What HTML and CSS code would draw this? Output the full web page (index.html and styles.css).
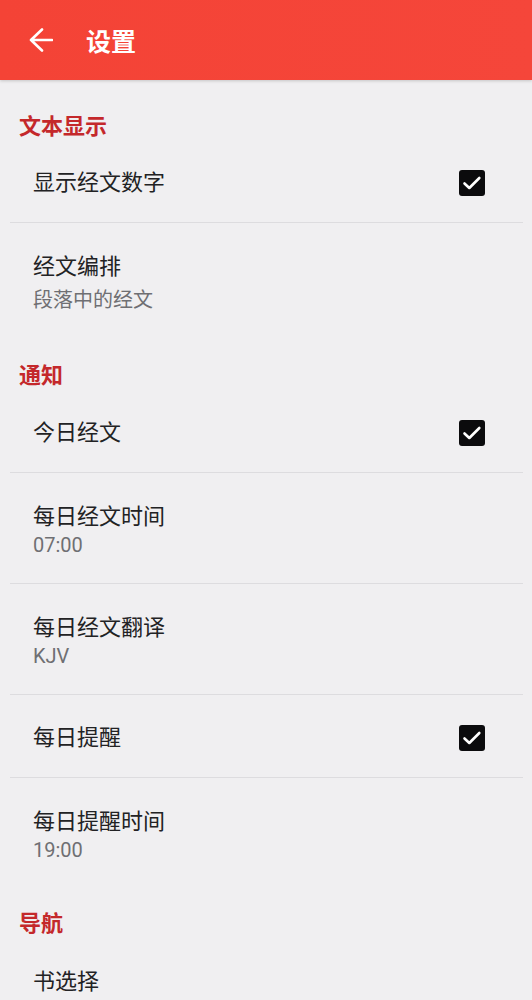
FILE: index.html
```html
<!DOCTYPE html>
<html lang="zh-CN">
<head>
<meta charset="utf-8">
<title>设置</title>
<link rel="stylesheet" href="styles.css">
</head>
<body>
<header class="toolbar">
  <svg class="back" width="24" height="24" viewBox="0 0 24 24" aria-hidden="true">
    <path d="M23 12H2M13 1.5L2 12l11 10.5" fill="none" stroke="#fff" stroke-width="2.6" stroke-linecap="round" stroke-linejoin="round"/>
  </svg>
  <h1 class="title">设置</h1>
</header>
<main class="prefs">
  <div class="category first">文本显示</div>
  <div class="pref single">
    <span class="pref-title">显示经文数字</span>
    <span class="check"><svg width="26" height="26" viewBox="0 0 26 26"><path d="M5.5 13.5l4.8 4.5 10-10" fill="none" stroke="#fff" stroke-width="2.6" stroke-linecap="round" stroke-linejoin="round"/></svg></span>
  </div>
  <div class="pref double last spaced">
    <span class="pref-title">经文编排</span>
    <span class="pref-sub">段落中的经文</span>
  </div>

  <div class="category">通知</div>
  <div class="pref single">
    <span class="pref-title">今日经文</span>
    <span class="check"><svg width="26" height="26" viewBox="0 0 26 26"><path d="M5.5 13.5l4.8 4.5 10-10" fill="none" stroke="#fff" stroke-width="2.6" stroke-linecap="round" stroke-linejoin="round"/></svg></span>
  </div>
  <div class="pref double">
    <span class="pref-title">每日经文时间</span>
    <span class="pref-sub">07:00</span>
  </div>
  <div class="pref double">
    <span class="pref-title">每日经文翻译</span>
    <span class="pref-sub">KJV</span>
  </div>
  <div class="pref single">
    <span class="pref-title">每日提醒</span>
    <span class="check"><svg width="26" height="26" viewBox="0 0 26 26"><path d="M5.5 13.5l4.8 4.5 10-10" fill="none" stroke="#fff" stroke-width="2.6" stroke-linecap="round" stroke-linejoin="round"/></svg></span>
  </div>
  <div class="pref double last">
    <span class="pref-title">每日提醒时间</span>
    <span class="pref-sub">19:00</span>
  </div>

  <div class="category tight">导航</div>
  <div class="pref single last">
    <span class="pref-title">书选择</span>
  </div>
</main>
</body>
</html>
```
FILE: styles.css
```css
html, body {
  margin: 0;
  padding: 0;
}
body {
  width: 532px;
  min-height: 1000px;
  background: #f0eff1;
  font-family: Roboto, "Noto Sans CJK SC", sans-serif;
  color: #222224;
  overflow: hidden;
}
.toolbar {
  height: 80px;
  box-sizing: border-box;
  background: linear-gradient(90deg, #f44336, #f5463a);
  display: flex;
  align-items: center;
  padding-left: 29px;
  box-shadow: 0 1px 3px rgba(0,0,0,0.18);
  position: relative;
}
.back {
  display: block;
  flex: none;
}
.title {
  margin: 0 0 0 33px;
  font-size: 25px;
  font-weight: bold;
  color: #fff;
  line-height: 30px;
  font-family: "Noto Sans CJK SC", sans-serif;
}
.prefs {
  display: flex;
  flex-direction: column;
}
.category {
  padding: 29px 0 6px 19px;
  font-size: 22px;
  line-height: 22px;
  font-weight: bold;
  color: #c4282b;
  font-family: "Noto Sans CJK SC", sans-serif;
}
.category.first {
  padding-top: 33px;
  padding-bottom: 5px;
}
.category.tight {
  padding-top: 22px;
  padding-bottom: 7px;
}
.pref {
  margin: 0 9px 0 10px;
  padding-left: 23px;
  padding-right: 38px;
  border-bottom: 1px solid #dddcdf;
  box-sizing: border-box;
}
.pref.last {
  border-bottom: none;
}
.pref.single {
  height: 83px;
  padding-top: 4px;
  display: flex;
  align-items: center;
  justify-content: space-between;
}
.pref.single.last {
  height: 82px;
}
.pref.double {
  height: 111px;
  padding-top: 29px;
  display: flex;
  flex-direction: column;
}
.pref.double.last {
  height: 110px;
}
.pref-title {
  font-size: 22px;
  line-height: 30px;
}
.pref-sub {
  font-size: 20px;
  line-height: 30px;
  margin-top: -2px;
  color: #6f6f73;
}
.pref.spaced .pref-sub {
  margin-top: 3px;
}
.check {
  width: 26px;
  height: 26px;
  border-radius: 3px;
  background: #0b0b0d;
  display: block;
  flex: none;
}
.check svg {
  display: block;
}
```
